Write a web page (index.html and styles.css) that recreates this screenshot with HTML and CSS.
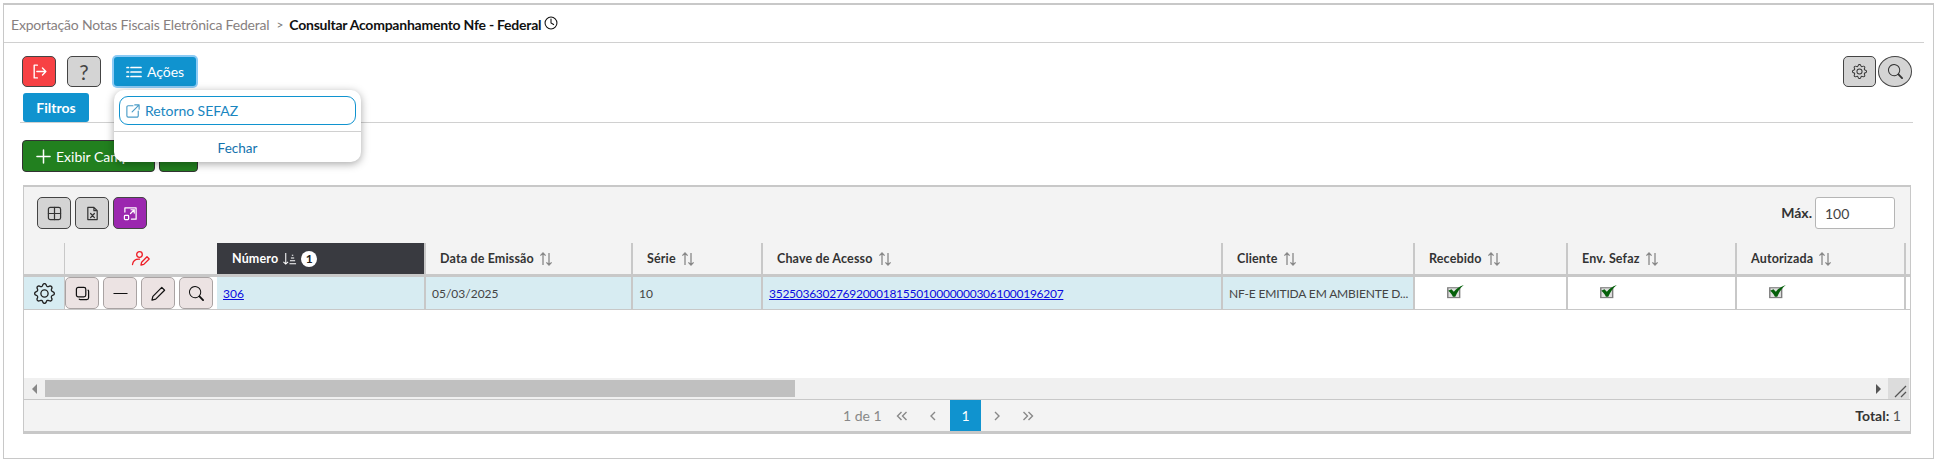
FILE: index.html
```html
<!DOCTYPE html>
<html lang="pt-BR">
<head>
<meta charset="utf-8">
<title>Consultar Acompanhamento Nfe - Federal</title>
<link rel="stylesheet" href="styles.css">
</head>
<body>
<svg class="defs" aria-hidden="true">
  <symbol id="gear" viewBox="0 0 16 16">
    <path d="M8 4.754a3.246 3.246 0 1 0 0 6.492 3.246 3.246 0 0 0 0-6.492zM5.754 8a2.246 2.246 0 1 1 4.492 0 2.246 2.246 0 0 1-4.492 0z"/>
    <path d="M9.796 1.343c-.527-1.79-3.065-1.79-3.592 0l-.094.319a.873.873 0 0 1-1.255.52l-.292-.16c-1.64-.892-3.433.902-2.54 2.541l.159.292a.873.873 0 0 1-.52 1.255l-.319.094c-1.79.527-1.79 3.065 0 3.592l.319.094a.873.873 0 0 1 .52 1.255l-.16.292c-.892 1.64.901 3.434 2.541 2.54l.292-.159a.873.873 0 0 1 1.255.52l.094.319c.527 1.79 3.065 1.79 3.592 0l.094-.319a.873.873 0 0 1 1.255-.52l.292.16c1.64.893 3.434-.902 2.54-2.541l-.159-.292a.873.873 0 0 1 .52-1.255l.319-.094c1.79-.527 1.79-3.065 0-3.592l-.319-.094a.873.873 0 0 1-.52-1.255l.16-.292c.893-1.64-.902-3.433-2.541-2.54l-.292.159a.873.873 0 0 1-1.255-.52l-.094-.319zm-2.633.283c.246-.835 1.428-.835 1.674 0l.094.319a1.873 1.873 0 0 0 2.693 1.115l.291-.16c.764-.415 1.6.42 1.184 1.185l-.159.292a1.873 1.873 0 0 0 1.116 2.692l.318.094c.835.246.835 1.428 0 1.674l-.319.094a1.873 1.873 0 0 0-1.115 2.693l.16.291c.415.764-.42 1.6-1.185 1.184l-.291-.159a1.873 1.873 0 0 0-2.693 1.116l-.094.318c-.246.835-1.428.835-1.674 0l-.094-.319a1.873 1.873 0 0 0-2.692-1.115l-.292.16c-.764.415-1.6-.42-1.184-1.185l.159-.291A1.873 1.873 0 0 0 1.945 8.93l-.319-.094c-.835-.246-.835-1.428 0-1.674l.319-.094A1.873 1.873 0 0 0 3.06 4.377l-.16-.292c-.415-.764.42-1.6 1.185-1.184l.292.159a1.873 1.873 0 0 0 2.692-1.115l.094-.319z"/>
  </symbol>
  <symbol id="search" viewBox="0 0 16 16">
    <path d="M11.742 10.344a6.5 6.5 0 1 0-1.397 1.398h-.001c.03.04.062.078.098.115l3.85 3.85a1 1 0 0 0 1.415-1.414l-3.85-3.85a1.007 1.007 0 0 0-.115-.1zM12 6.5a5.5 5.5 0 1 1-11 0 5.5 5.5 0 0 1 11 0z"/>
  </symbol>
  <symbol id="sort" viewBox="0 0 16 16">
    <path class="line" d="M5 14V2M2.4 4.6 5 2l2.6 2.6M11 2v12M8.4 11.4 11 14l2.6-2.6"/>
  </symbol>
  <symbol id="check" viewBox="0 0 16 16" preserveAspectRatio="none">
    <rect x="1.500" y="4" width="10" height="10.500" fill="#e0e0e0" stroke="#7d7d7d" stroke-width="1.200"/>
    <path d="M1.800 7.200 4.600 5.600l2 2.600C8.400 5.200 11 2.800 15 1c-3 3.200-5.400 7-7.200 12.500H5.800C5 11 3.600 9 1.800 7.200z" fill="#05600a"/>
  </symbol>
</svg>

<main class="page">
  <header class="crumbs">
    <span class="crumb-parent">Exportação Notas Fiscais Eletrônica Federal</span>
    <span class="crumb-sep">&gt;</span>
    <span class="crumb-current">Consultar Acompanhamento Nfe - Federal</span>
    <svg class="clock" viewBox="0 0 16 16"><circle cx="8" cy="8" r="6.800"/><path d="M8 3.500V8l3 1.800"/></svg>
  </header>

  <section class="toolbar">
    <div class="toolbar-left">
      <button class="btn btn-red" aria-label="Sair">
        <svg class="ico-line" viewBox="0 0 16 16"><path d="M6 2H3v12h3M5.500 8H14M10.800 4.800 14 8l-3.200 3.200"/></svg>
      </button>
      <button class="btn btn-gray btn-help">?</button>
      <div class="menu-wrap">
        <button class="btn-actions">
          <svg class="ico-line" viewBox="0 0 16 16"><path d="M5 3.500h10M5 8h10M5 12.500h10M1 3.500h1.500M1 8h1.500M1 12.500h1.500"/></svg>
          Ações
        </button>
        <div class="menu">
          <div class="menu-item">
            <svg class="ico-line" viewBox="0 0 16 16"><path d="M8 2H2.500A1.500 1.500 0 0 0 1 3.500v10A1.500 1.500 0 0 0 2.500 15h10a1.500 1.500 0 0 0 1.500-1.500V8M7 9l8-8M10 1h5v5"/></svg>
            Retorno SEFAZ
          </div>
          <div class="menu-close">Fechar</div>
        </div>
      </div>
    </div>
    <div class="toolbar-right">
      <button class="btn btn-gray btn-cfg" aria-label="Configurar"><svg class="ico-fill"><use href="#gear"/></svg></button>
      <button class="btn-round" aria-label="Pesquisar"><svg class="ico-fill"><use href="#search"/></svg></button>
    </div>
  </section>

  <nav class="tabs"><span class="tab">Filtros</span></nav>

  <section class="fields">
    <button class="btn-green btn-green-wide">
      <svg class="ico-line" viewBox="0 0 16 16"><path d="M8 1v14M1 8h14"/></svg>
      Exibir Campos
    </button>
    <button class="btn-green btn-green-small" aria-label="Opções"></button>
  </section>

  <section class="panel">
    <div class="panel-tools">
      <div class="tool-group">
        <button class="btn btn-gray btn-tool" aria-label="Colunas">
          <svg class="ico-line" viewBox="0 0 16 16"><rect x="1.500" y="1.500" width="13" height="13" rx="2"/><path d="M8 1.500v13M1.500 8h13"/></svg>
        </button>
        <button class="btn btn-gray btn-tool" aria-label="Excel">
          <svg class="ico-line" viewBox="0 0 16 16"><path d="M3 1.500h6.500L13 5v9.500H3zM9.500 1.500V5H13M6 8l4 4.500M10 8l-4 4.500"/></svg>
        </button>
        <button class="btn btn-purple btn-tool" aria-label="Expandir">
          <svg class="ico-line" viewBox="0 0 16 16"><path d="M2 6.500V2h12v12H9M8 8l4-4M8.500 4H12v3.500"/><rect x="1.500" y="10" width="4.500" height="4.500" rx=".8"/></svg>
        </button>
      </div>
      <label class="max-field">
        <span class="max-label">Máx.</span>
        <span class="max-input">100</span>
      </label>
    </div>

    <div class="grid">
      <div class="th th-gear"></div>
      <div class="th th-edit">
        <svg class="user-edit" viewBox="0 0 20 16"><circle cx="8.500" cy="4" r="2.800"/><path d="M1.500 14c.5-3.500 3-5.500 7-5.300M10 14.500l.6-2.800 5.400-5.400 2.200 2.200-5.400 5.400z"/></svg>
      </div>
      <div class="th th-active">Número
        <svg class="sort-active" viewBox="0 0 16 16"><path d="M4 2v12M1.500 11.500 4 14l2.500-2.500M8 13.500h7M8.500 10.500h5.500M9.500 7.500h3.500M10.500 4.500h1.500"/></svg>
        <span class="badge">1</span>
      </div>
      <div class="th">Data de Emissão <svg class="sort"><use href="#sort"/></svg></div>
      <div class="th">Série <svg class="sort"><use href="#sort"/></svg></div>
      <div class="th">Chave de Acesso <svg class="sort"><use href="#sort"/></svg></div>
      <div class="th">Cliente <svg class="sort"><use href="#sort"/></svg></div>
      <div class="th">Recebido <svg class="sort"><use href="#sort"/></svg></div>
      <div class="th">Env. Sefaz <svg class="sort"><use href="#sort"/></svg></div>
      <div class="th">Autorizada <svg class="sort"><use href="#sort"/></svg></div>
      <div class="th th-end"></div>

      <div class="td td-tint td-gear"><svg class="ico-fill"><use href="#gear"/></svg></div>
      <div class="td td-actions">
        <button class="row-btn" aria-label="Copiar"><svg class="ico-line" viewBox="0 0 16 16"><rect x="1.500" y="1.500" width="10" height="10" rx="2"/><path d="M14 4.500a1.500 1.500 0 0 1 .500 1.200v6.800a2 2 0 0 1-2 2H5.700a1.500 1.500 0 0 1-1.200-.5"/></svg></button>
        <button class="row-btn" aria-label="Remover"><svg class="ico-line" viewBox="0 0 16 16"><path d="M1 8h14"/></svg></button>
        <button class="row-btn" aria-label="Editar"><svg class="ico-line" viewBox="0 0 16 16"><path d="M11.500 1.500 14.500 4.500 5 14l-4 1 1-4z"/></svg></button>
        <button class="row-btn" aria-label="Ver"><svg class="ico-fill"><use href="#search"/></svg></button>
      </div>
      <div class="td td-tint"><a href="#">306</a></div>
      <div class="td td-tint">05/03/2025</div>
      <div class="td td-tint">10</div>
      <div class="td td-tint"><a class="key" href="#">35250363027692000181550100000003061000196207</a></div>
      <div class="td td-tint td-client">NF-E EMITIDA EM AMBIENTE D...</div>
      <div class="td td-check"><svg class="check"><use href="#check"/></svg></div>
      <div class="td td-check"><svg class="check"><use href="#check"/></svg></div>
      <div class="td td-check"><svg class="check"><use href="#check"/></svg></div>
      <div class="td td-end"></div>
    </div>

    <div class="spacer"></div>

    <div class="scrollbar">
      <span class="arrow arrow-left"></span>
      <span class="thumb"></span>
      <span class="arrow arrow-right"></span>
      <span class="corner">
        <svg viewBox="0 0 14 14"><path d="M2 13 13 2M8 13l5-5"/></svg>
      </span>
    </div>

    <footer class="pager">
      <div class="pager-center">
        <span class="pager-count">1 de 1</span>
        <span class="pager-link">
          <svg viewBox="0 0 12 12"><path d="M5.500 2 1.500 6l4 4M10.500 2l-4 4 4 4"/></svg>
        </span>
        <span class="pager-link">
          <svg viewBox="0 0 12 12"><path d="M8 2 4 6l4 4"/></svg>
        </span>
        <span class="pager-current">1</span>
        <span class="pager-link">
          <svg viewBox="0 0 12 12"><path d="M4 2l4 4-4 4"/></svg>
        </span>
        <span class="pager-link">
          <svg viewBox="0 0 12 12"><path d="M1.500 2l4 4-4 4M6.500 2l4 4-4 4"/></svg>
        </span>
      </div>
      <div class="pager-total"><b>Total:</b> 1</div>
    </footer>
  </section>
</main>
</body>
</html>
```
FILE: styles.css
```css
* { box-sizing: border-box; }
html, body { margin: 0; padding: 0; background: #fff; overflow: hidden; }
body { padding: 3px 2px 3px 3px; height: 462px; font-family: Lato, "Liberation Sans", sans-serif; font-size: 13px; color: #333; }
.defs { display: none; }
button { font-family: inherit; padding: 0; margin: 0; cursor: pointer; }
svg { display: block; }

.ico-line { fill: none; stroke: currentColor; stroke-width: 1.300; stroke-linecap: round; stroke-linejoin: round; }
.ico-fill { fill: currentColor; }
.line { fill: none; stroke: currentColor; stroke-width: 1.300; }

.page { height: 456px; border: 1px solid #c8c8c8; border-top-width: 2px; background: #fff; }

.crumbs { display: flex; align-items: center; height: 38px; margin-right: 9px; padding: 1px 0 0 7px; border-bottom: 1px solid #d0d0d0; font-size: 14px; }
.crumb-parent { color: #877f7f; letter-spacing: -.2px; }
.crumb-sep { margin: 0 6px 0 7px; color: #777; font-size: 12px; }
.crumb-current { color: #111; font-weight: 700; letter-spacing: -.24px; }
.clock { width: 14px; height: 14px; margin: -3px 0 0 3px; fill: none; stroke: #111; stroke-width: 1.200; stroke-linecap: round; }

.toolbar { display: flex; justify-content: space-between; height: 31px; margin-top: 13px; padding-left: 18px; padding-right: 21px; }
.toolbar-left, .toolbar-right { display: flex; }
.btn { display: flex; align-items: center; justify-content: center; width: 34px; height: 31px; border: 1px solid #444; border-radius: 5px; }
.btn-red { background: #f74144; color: #fff; }
.btn-red svg { width: 17px; height: 17px; }
.btn-gray { background: #d4d4d4; color: #333; }
.btn-help { margin-left: 11px; font-size: 21px; font-weight: 400; color: #444; }

.menu-wrap { position: relative; margin-left: 13px; }
.btn-actions { display: flex; align-items: center; justify-content: center; gap: 5px; width: 82px; height: 29px; margin-top: 1px; border: 0; border-radius: 3px; background: #1093cf; color: #fff; font-size: 14px; box-shadow: 0 0 0 2px #8ccbf5; }
.btn-actions svg { width: 16px; height: 16px; stroke-width: 1.700; }
.menu { position: absolute; top: 34px; left: 0; z-index: 5; width: 247px; height: 72px; padding-top: 6px; border-radius: 10px; background: #fff; box-shadow: 0 2px 8px rgba(0,0,0,.35); }
.menu-item { display: flex; align-items: center; gap: 5px; height: 29px; margin: 0 5px; padding-left: 6px; border: 1px solid #1093cf; border-radius: 9px; color: #1a86bf; font-size: 14px; letter-spacing: -.05px; }
.menu-item svg { width: 14px; height: 14px; color: #4a9cc7; }
.menu-close { margin-top: 6px; padding-top: 8px; border-top: 1px solid #d0d0d0; text-align: center; color: #1272ad; font-size: 13.500px; }

.btn-cfg { width: 33px; }
.btn-cfg svg { width: 15px; height: 15px; }
.btn-round { display: flex; align-items: center; justify-content: center; width: 34px; height: 31px; margin-left: 2px; border: 1px solid #444; border-radius: 50%; background: #d4d4d4; color: #333; }
.btn-round svg { width: 15px; height: 15px; }

.tabs { height: 30px; margin: 6px 20px 0 16px; padding-left: 3px; border-bottom: 1px solid #d0d0d0; }
.tab { display: flex; align-items: center; justify-content: center; width: 66px; height: 29px; border-radius: 3px; background: #1093cf; color: #fff; font-size: 14px; font-weight: 700; }

.fields { display: flex; gap: 4px; height: 32px; margin-top: 17px; padding-left: 18px; }
.btn-green { display: flex; align-items: center; gap: 5px; height: 32px; border: 1px solid #333; border-radius: 4px; background: #22801f; color: #fff; font-size: 14px; }
.btn-green svg { width: 15px; height: 15px; stroke-width: 1.600; }
.btn-green-wide { width: 133px; padding-left: 13px; }
.btn-green-small { width: 39px; }

.panel { display: flex; flex-direction: column; width: 1888px; height: 249px; margin: 13px 0 0 19px; border: 1px solid #c8c8c8; border-top-width: 2px; }
.panel-tools { display: flex; justify-content: space-between; height: 56px; padding: 10px 15px 0 13px; background: #f3f3f3; }
.tool-group { display: flex; gap: 4px; }
.btn-tool { height: 32px; }
.btn-tool svg { width: 15px; height: 15px; }
.btn-purple { background: #9b27af; color: #fff; }
.max-field { display: flex; align-items: flex-start; }
.max-label { margin: 7px 3px 0 0; font-size: 14px; font-weight: 700; color: #333; }
.max-input { width: 80px; height: 32px; padding: 7px 0 0 9px; border: 1px solid #b5b5b5; border-radius: 3px; background: #fff; font-size: 14px; color: #444; }

.grid { display: grid; grid-template-columns: 41px 152px 209px 207px 130px 460px 192px 153px 169px 169px 1fr; grid-template-rows: 34px 33px; }
.th { display: flex; align-items: center; gap: 4px; padding-left: 14px; background: #f3f3f3; border-right: 2px solid #c8c8c8; border-bottom: 3px solid #c8c8c8; font-size: 12.500px; font-weight: 700; letter-spacing: .15px; color: #333; white-space: nowrap; }
.th-gear { border-right: 1px solid #c8c8c8; padding: 0; }
.th-edit { justify-content: center; padding: 0; border-right: 0; }
.th-active { background: #393a40; color: #fff; padding-left: 15px; }
.th-end { border-right: 0; padding: 0; }
.sort { width: 16px; height: 16px; color: #888; }
.sort-active { width: 15px; height: 15px; fill: none; stroke: #fff; stroke-width: 1.100; }
.badge { display: flex; align-items: center; justify-content: center; width: 16px; height: 16px; border-radius: 50%; background: #fff; color: #222; font-size: 12px; }
.user-edit { width: 20px; height: 17px; fill: none; stroke: #ee1c25; stroke-width: 1.300; stroke-linecap: round; stroke-linejoin: round; }

.td { display: flex; align-items: center; padding-left: 6px; background: #fff; border-right: 2px solid #c8c8c8; border-bottom: 1px solid #c8c8c8; font-size: 12px; color: #444; white-space: nowrap; overflow: hidden; }
.td a { color: #0a0ae0; text-decoration: underline; }
.td a.key { letter-spacing: -.27px; }
.td-tint { background: #d7ecf2; }
.td-gear { justify-content: center; padding: 0; border-right: 1px solid #c8c8c8; color: #222; }
.td-gear svg { width: 21px; height: 21px; }
.td-actions { gap: 4px; padding: 0; border-right: 0; align-items: flex-start; }
.row-btn { display: flex; align-items: center; justify-content: center; flex: none; width: 34px; height: 32px; border: 1px solid #a9a3a3; border-radius: 5px; background: #ece3e3; color: #111; }
.row-btn svg { width: 15px; height: 15px; }
.td-client { letter-spacing: -.15px; }
.td-check { align-items: flex-start; padding: 7px 0 0 31px; }
.check { width: 19px; height: 15px; }
.td-end { border-right: 0; padding: 0; }

.spacer { flex: 1; background: #fff; }

.scrollbar { position: relative; display: flex; align-items: center; height: 21px; background: #f0f0f0; }
.thumb { width: 750px; height: 17px; margin-left: 21px; background: #c0c0c0; }
.arrow { position: absolute; top: 6px; width: 0; height: 0; border-top: 5px solid transparent; border-bottom: 5px solid transparent; }
.arrow-left { left: 8px; border-right: 5px solid #888; }
.arrow-right { left: 1852px; border-left: 5px solid #555; }
.corner { position: absolute; top: 0; right: 1px; width: 21px; height: 21px; background: #dcdcdc; }
.corner svg { width: 14px; height: 14px; margin: 6px 0 0 5px; fill: none; stroke: #555; stroke-width: 1.300; }

.pager { position: relative; display: flex; align-items: center; justify-content: flex-end; height: 34px; padding-right: 9px; background: #f3f3f3; border-top: 1px solid #c8c8c8; border-bottom: 2px solid #c8c8c8; }
.pager-center { position: absolute; top: 0; left: 819px; display: flex; align-items: center; height: 31px; color: #888; font-size: 14px; }
.pager-count { width: 43px; }
.pager-link { display: flex; justify-content: center; width: 31px; color: #888; }
.pager-link svg { width: 12px; height: 12px; fill: none; stroke: currentColor; stroke-width: 1.400; }
.pager-current { display: flex; align-items: center; justify-content: center; width: 31px; height: 31px; margin-left: 2px; background: #1093cf; color: #fff; font-size: 14px; font-weight: 400; }
.pager-total { font-size: 14px; color: #555; }
.pager-total b { color: #333; }
```
